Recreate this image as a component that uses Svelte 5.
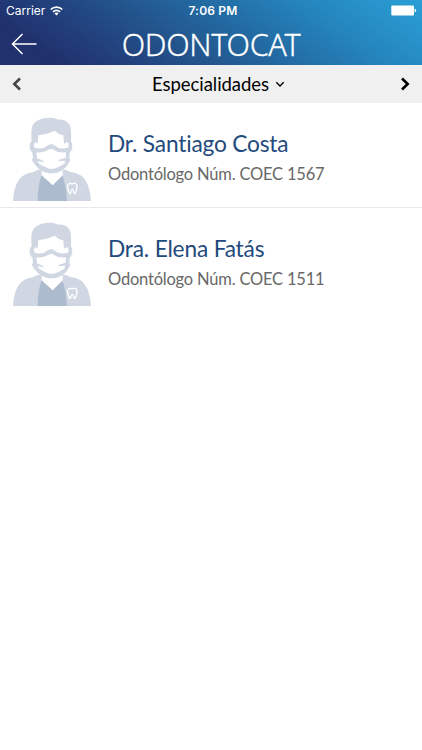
<script lang="ts">
	interface Doctor {
		name: string;
		detail: string;
	}

	const doctors: Doctor[] = [
		{ name: 'Dr. Santiago Costa', detail: 'Odontólogo Núm. COEC 1567' },
		{ name: 'Dra. Elena Fatás', detail: 'Odontólogo Núm. COEC 1511' }
	];
</script>

{#snippet avatar()}
	<svg class="avatar" viewBox="39 36 234 252" aria-hidden="true">
		<!-- coat and shirt -->
		<path fill="#d0d7e3" d="M39 288C42 250 50 222 74 209C88 202 103 202 114 194L198 194C209 202 226 202 239 209C261 222 270 250 273 288Z" />
		<path fill="#adbbcf" d="M113 288C113 255 118 228 126 208L158 239L187 210C195 233 200 260 201 288Z" />
		<path fill="#fff" d="M125 190H188V211L158 241L125 211Z" />
		<!-- head -->
		<path fill="#d0d7e3" d="M95 108C93 84 92 61 107 50C124 37 158 34 174 44C194 41 210 53 212 70C214 84 213 97 213 109C219 118 218 137 209 143L208 159L211 165L203 179C195 193 176 205 155 205C134 205 116 194 106 180L95 165L99 158L97 142C87 136 86 117 95 108Z" />
		<path fill="#fff" d="M115 91C134 88 151 83 164 77C170 84 181 89 190 91L192 116L197 114L200 111L204 113C207 120 206 125 203 128C193 131 182 131 174 128C167 124 162 118 153 118C144 118 140 125 131 129C122 131 111 131 104 128C101 124 101 118 104 113L109 112L113 116Z" />
		<!-- mask -->
		<path fill="#fff" d="M109 142C122 144 134 141 142 136C150 130 157 131 164 136C173 142 185 144 198 142L197 158L177 164L175 169L196 167L193 176C178 185 168 190 155 192C142 191 132 185 118 177L112 168L131 172L130 168L111 160Z" />
		<path class="tooth" d="M209 235C201 238 202 246 204 251C206 257 205 265 210 266C215 266 211 253 217 253C223 253 219 266 224 266C229 265 228 257 230 251C232 245 232 237 225 235C221 234 218 237 216 237C214 237 212 234 209 235Z" />
	</svg>
{/snippet}

<div class="screen">
	<header>
		<div class="status">
			<div class="carrier">
				<span>Carrier</span>
				<svg width="13" height="10" viewBox="0 0 13 10" aria-hidden="true">
					<path d="M.7 3.5C4 .2 9 .2 12.3 3.5M2.9 5.9C5 4 8 4 10.1 5.9" />
					<path class="dot" d="M4.4 7.3Q6.5 5.6 8.6 7.3L6.5 9.6Z" />
				</svg>
			</div>
			<time>7:06 PM</time>
			<svg class="battery" width="26" height="11" viewBox="0 0 26 11" aria-hidden="true">
				<rect x="0.3" y="0.5" width="22.7" height="10" rx="1" />
				<path d="M23.7 3.8Q25.2 4 25.2 5.5T23.7 7.2Z" />
			</svg>
		</div>
		<div class="title-bar">
			<button class="back" aria-label="Atrás">
				<svg width="28" height="24" viewBox="0 0 28 24" aria-hidden="true">
					<path d="M12.5 2L2.5 12L12.5 22M2.5 12H26.5" />
				</svg>
			</button>
			<h1>ODONTOCAT</h1>
		</div>
	</header>

	<nav>
		<button class="prev" aria-label="Anterior">
			<svg width="10" height="14" viewBox="0 0 10 14" aria-hidden="true">
				<path d="M8 1.5L2.3 7L8 12.5" />
			</svg>
		</button>
		<button class="filter">
			Especialidades
			<svg width="10" height="7" viewBox="0 0 10 7" aria-hidden="true">
				<path d="M1.3 1.2L5 4.9L8.7 1.2" />
			</svg>
		</button>
		<button class="next" aria-label="Siguiente">
			<svg width="10" height="14" viewBox="0 0 10 14" aria-hidden="true">
				<path d="M2 1.5L7.7 7L2 12.5" />
			</svg>
		</button>
	</nav>

	<ul>
		{#each doctors as doctor}
			<li>
				{@render avatar()}
				<div class="info">
					<h2>{doctor.name}</h2>
					<p>{doctor.detail}</p>
				</div>
			</li>
		{/each}
	</ul>
</div>

<style>
	:global(body) {
		margin: 0;
		background: #fff;
	}

	.screen {
		min-height: 750px;
		font-family: Lato, sans-serif;
	}

	header {
		box-sizing: border-box;
		height: 65px;
		background: linear-gradient(35deg, #21346f 0%, #20306c 11%, #22427e 27%, #235b92 45%, #236ca5 58%, #2585bd 76%, #2a9fd6 100%);
		color: #fff;
	}

	.status {
		display: grid;
		grid-template-columns: 1fr auto 1fr;
		align-items: center;
		height: 21px;
		padding: 0 5px 0 6px;
		font-family: Inter, sans-serif;
		font-size: 12px;
	}

	.carrier {
		display: flex;
		align-items: center;
		gap: 5px;
	}

	.carrier svg {
		fill: none;
		stroke: #fff;
		stroke-width: 1.7;
	}

	.carrier .dot {
		fill: #fff;
		stroke: none;
	}

	time {
		padding-left: 3px;
		font-weight: 600;
		letter-spacing: 0.2px;
	}

	.battery {
		justify-self: end;
		fill: #fff;
	}

	.title-bar {
		display: grid;
		grid-template-columns: 44px 1fr 44px;
		align-items: center;
		height: 44px;
	}

	button {
		display: flex;
		align-items: center;
		padding: 0;
		border: none;
		background: none;
		color: #000;
		font: inherit;
	}

	button svg {
		fill: none;
		stroke: currentColor;
	}

	.back {
		padding-left: 10px;
		color: #fff;
	}

	.back svg {
		stroke-width: 1.5;
	}

	h1 {
		margin: 0;
		font-family: 'Noto Sans', 'Open Sans', sans-serif;
		font-size: 30.5px;
		font-weight: 300;
		letter-spacing: -0.3px;
		line-height: 46px;
		text-align: center;
		-webkit-text-stroke: 0.3px #fff;
	}

	nav {
		display: flex;
		align-items: center;
		justify-content: space-between;
		box-sizing: border-box;
		height: 38px;
		padding: 0 12px;
		background: #f0f0f0;
	}

	.prev,
	.next {
		stroke-width: 2.6;
	}

	.prev {
		color: #444;
	}

	.filter {
		gap: 6px;
		padding-left: 15px;
		font-size: 18.5px;
		letter-spacing: -0.05px;
	}

	.filter svg {
		stroke-width: 1.4;
	}

	ul {
		margin: 0;
		padding: 0;
		list-style: none;
	}

	li {
		display: flex;
		box-sizing: border-box;
		height: 105px;
		padding: 14px 13px 0;
		border-bottom: 1px solid #e9e9e9;
	}

	li:last-child {
		border-bottom: none;
	}

	.avatar {
		flex: none;
		width: 78px;
		height: 84px;
	}

	.tooth {
		fill: none;
		stroke: #fff;
		stroke-width: 4;
	}

	.info {
		padding: 12px 0 0 17px;
	}

	h2 {
		margin: 0;
		color: #234a7c;
		font-size: 22.7px;
		font-weight: 400;
		letter-spacing: -0.18px;
		line-height: 29px;
	}

	p {
		margin: 6px 0 0;
		color: #686868;
		font-size: 16.5px;
		letter-spacing: -0.2px;
		line-height: 21px;
	}
</style>
